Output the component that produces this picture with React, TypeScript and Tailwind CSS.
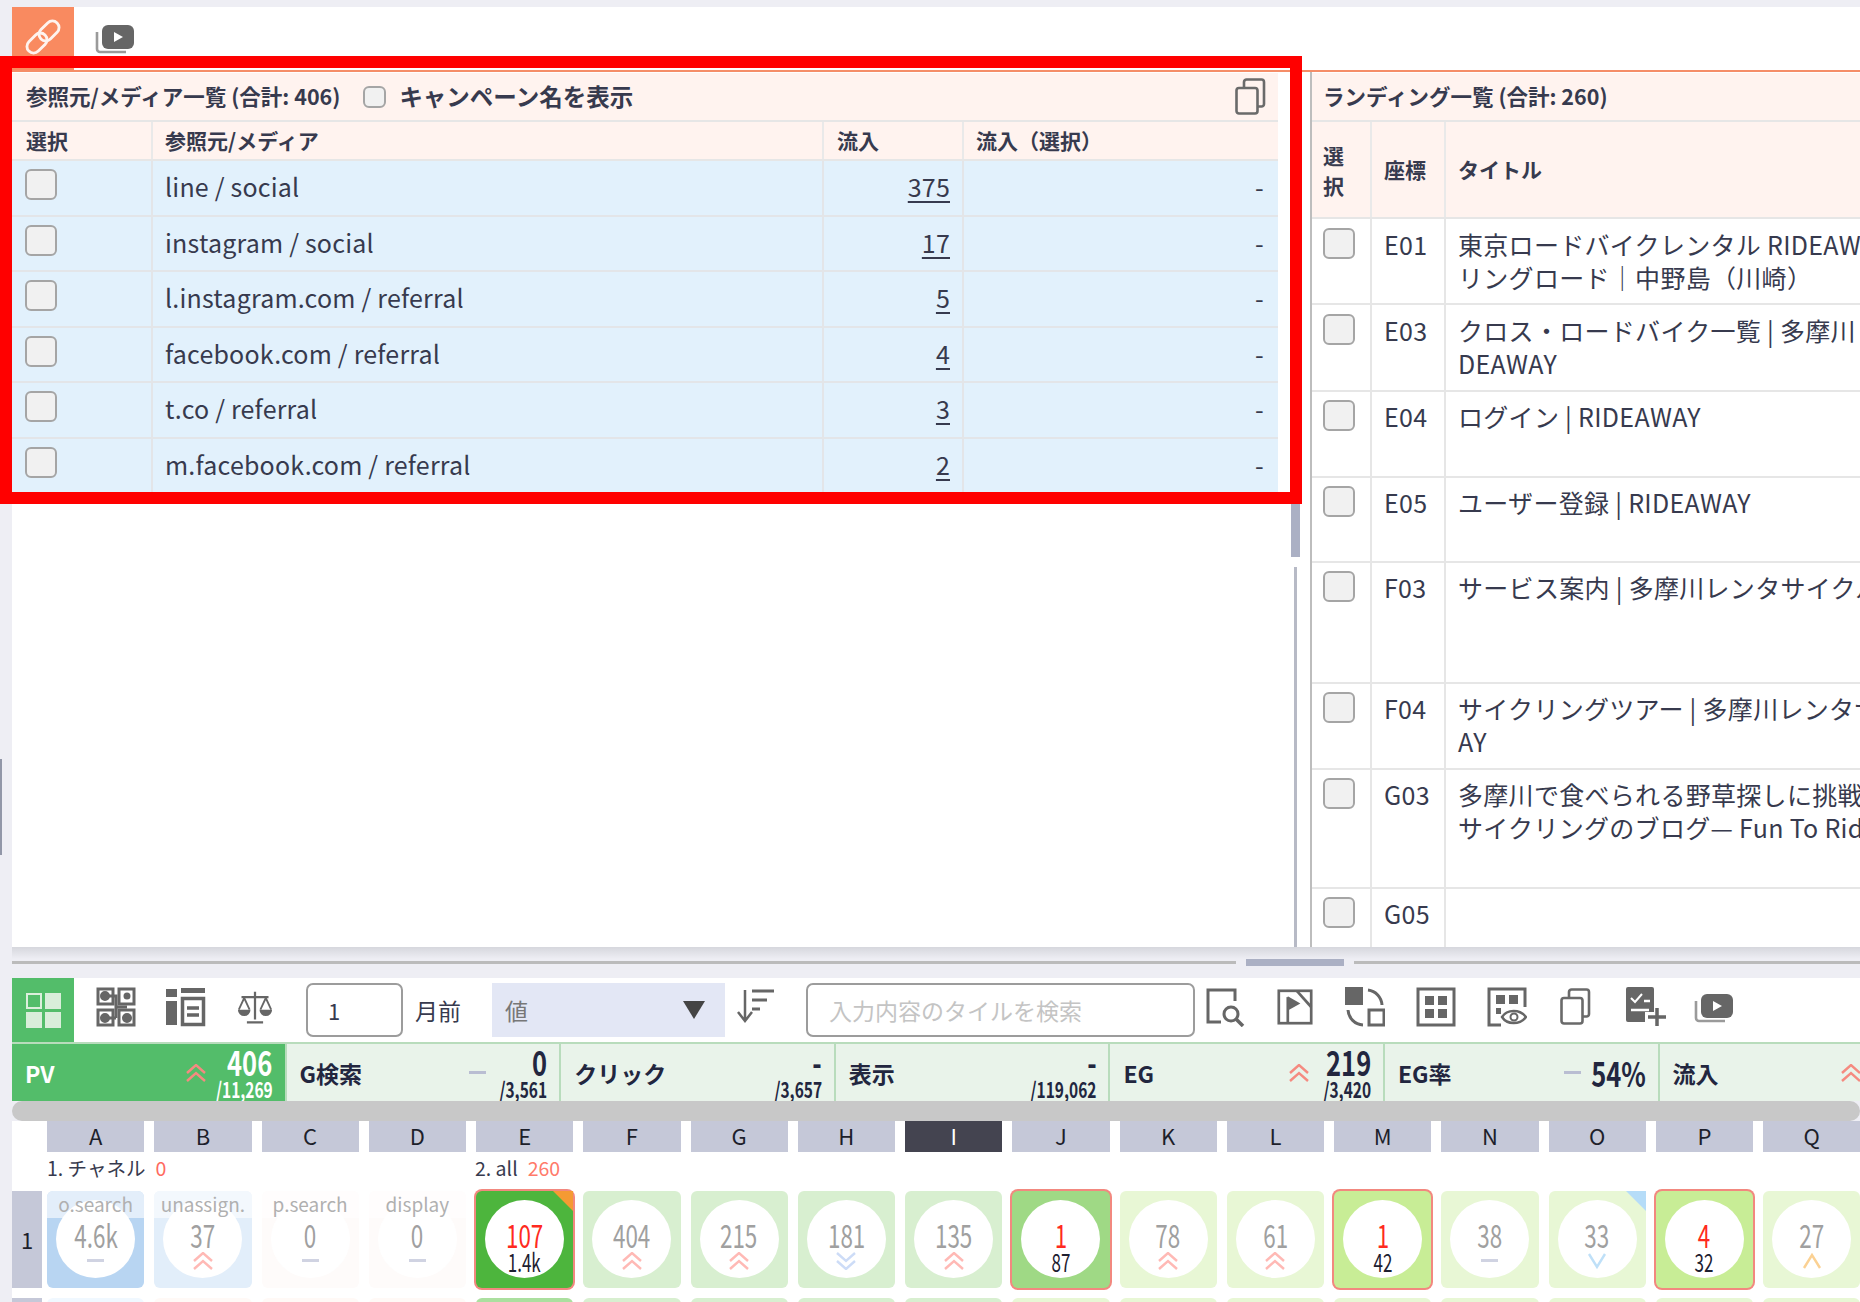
import { ReactNode } from "react";

const FONT = "font-['Noto_Sans_CJK_JP','Noto_Sans',sans-serif]";

type Trend = "up2" | "down2" | "up" | "down" | "dash";

function TrendMark({ kind, strong }: { kind: Trend; strong?: boolean }) {
  if (kind === "dash") {
    return <div className={`h-[3px] w-[17px] ${strong ? "bg-[#b9bdd2]" : "bg-[#d0d3e2]"}`} />;
  }
  const color =
    kind === "up2" ? (strong ? "#f58a80" : "#ffb9b5") : kind === "down2" ? "#cddcf7" : kind === "up" ? "#fbd193" : "#bfe0f8";
  return (
    <svg width="20" height="18" viewBox="0 0 20 18" fill="none" stroke={color} strokeWidth="2.4">
      {kind === "up2" && (
        <>
          <polyline points="1,9 10,1 19,9" />
          <polyline points="1,17 10,9 19,17" />
        </>
      )}
      {kind === "down2" && (
        <>
          <polyline points="1,1 10,9 19,1" />
          <polyline points="1,9 10,17 19,9" />
        </>
      )}
      {kind === "up" && <polyline points="2,16 10,3 18,16" />}
      {kind === "down" && <polyline points="2,2 10,15 18,2" />}
    </svg>
  );
}

function PlayStack({ className }: { className?: string }) {
  return (
    <svg className={className} viewBox="0 0 39 29" width="39" height="29">
      <path d="M2 7v17a3 3 0 0 0 3 3h26" fill="none" stroke="#9a9a9a" strokeWidth="2.6" />
      <rect x="7" y="0" width="32" height="24" rx="6" fill="#666" />
      <path d="M19 7l9 5-9 5z" fill="#fff" />
    </svg>
  );
}

function CopyIcon({ className }: { className?: string }) {
  return (
    <svg className={className} viewBox="0 0 31 37" width="31" height="37" fill="none" stroke="#6a6a6a" strokeWidth="2.6">
      <rect x="1.5" y="10" width="21" height="25.5" rx="2.5" />
      <path d="M9 10V4a2.5 2.5 0 0 1 2.500-2.500h15A2.500 2.500 0 0 1 29 4v22a2.500 2.500 0 0 1-2.500 2.500H22.500" />
    </svg>
  );
}

function ToolIcon({ children, w = 40 }: { children: ReactNode; w?: number }) {
  return (
    <svg className="mb-[7px]" viewBox="0 0 40 40" width={w} height="40" fill="none" stroke="#666" strokeWidth="3">
      {children}
    </svg>
  );
}

function Checkbox({ small }: { small?: boolean }) {
  return (
    <input
      type="checkbox"
      className={`appearance-none rounded-[6px] border-2 border-[#a5a5a5] bg-[#f1f1f1] ${small ? "h-[22px] w-[23px]" : "h-[31px] w-[32px]"}`}
    />
  );
}

const sources = [
  { name: "line / social", count: "375" },
  { name: "instagram / social", count: "17" },
  { name: "l.instagram.com / referral", count: "5" },
  { name: "facebook.com / referral", count: "4" },
  { name: "t.co / referral", count: "3" },
  { name: "m.facebook.com / referral", count: "2" },
];

const landings = [
  { code: "E01", lines: ["東京ロードバイクレンタル RIDEAWAY | 多摩川サイク", "リングロード｜中野島（川崎）"], h: "h-[86px]", top: "pt-[9px]" },
  { code: "E03", lines: ["クロス・ロードバイク一覧 | 多摩川レンタサイクル RI", "DEAWAY"], h: "h-[87px]", top: "pt-[9px]" },
  { code: "E04", lines: ["ログイン | RIDEAWAY"], h: "h-[86px]", top: "pt-[8px]" },
  { code: "E05", lines: ["ユーザー登録 | RIDEAWAY"], h: "h-[85px]", top: "pt-[8px]" },
  { code: "F03", lines: ["サービス案内 | 多摩川レンタサイクル RIDEAWAY"], h: "h-[121px]", top: "pt-[8px]" },
  { code: "F04", lines: ["サイクリングツアー | 多摩川レンタサイクル RIDEAW", "AY"], h: "h-[86px]", top: "pt-[8px]" },
  { code: "G03", lines: ["多摩川で食べられる野草探しに挑戦してみた", "サイクリングのブログ— Fun To Ride"], h: "h-[119px]", top: "pt-[8px]" },
  { code: "G05", lines: [""], h: "h-[60px]", top: "pt-[8px]" },
];

const stats: { label: string; trend?: Trend; shift?: string; value: string; total?: string; active?: boolean }[] = [
  { label: "PV", trend: "up2", value: "406", total: "/11,269", active: true },
  { label: "G検索", trend: "dash", shift: "ml-[8px]", value: "0", total: "/3,561" },
  { label: "クリック", value: "-", total: "/3,657" },
  { label: "表示", value: "-", total: "/119,062" },
  { label: "EG", trend: "up2", shift: "ml-[5px]", value: "219", total: "/3,420" },
  { label: "EG率", trend: "dash", shift: "ml-[5px]", value: "54%" },
  { label: "流入", trend: "up2", shift: "ml-[7px]", value: "", total: "" },
];

const letters = "ABCDEFGHIJKLMNOPQ".split("");

type Cell = {
  value: string;
  sub?: string;
  tag?: string;
  trend?: Trend;
  bg: string;
  corner?: "orange" | "blue";
};

const cells: Cell[] = [
  { value: "4.6k", tag: "o.search", trend: "dash", bg: "bg-[#b8d5f2]" },
  { value: "37", tag: "unassign.", trend: "up2", bg: "bg-[#e2eefa]" },
  { value: "0", tag: "p.search", trend: "dash", bg: "bg-[#fefbfa]" },
  { value: "0", tag: "display", trend: "dash", bg: "bg-[#fefbfa]" },
  { value: "107", sub: "1.4k", bg: "bg-[#4db53d]", corner: "orange" },
  { value: "404", trend: "up2", bg: "bg-[#d8efd0]" },
  { value: "215", trend: "up2", bg: "bg-[#d8efd0]" },
  { value: "181", trend: "down2", bg: "bg-[#d8efd0]" },
  { value: "135", trend: "up2", bg: "bg-[#d8efd0]" },
  { value: "1", sub: "87", bg: "bg-[#9fd985]" },
  { value: "78", trend: "up2", bg: "bg-[#e8f7d5]" },
  { value: "61", trend: "up2", bg: "bg-[#e8f7d5]" },
  { value: "1", sub: "42", bg: "bg-[#c8ed96]" },
  { value: "38", trend: "dash", bg: "bg-[#e8f7d5]" },
  { value: "33", trend: "down", bg: "bg-[#e8f7d5]", corner: "blue" },
  { value: "4", sub: "32", bg: "bg-[#c8ed96]" },
  { value: "27", trend: "up", bg: "bg-[#e8f7d5]" },
];

const nextRow = [
  "bg-[#f0f8ff]", "bg-[#fff9f6]", "bg-[#fff9f6]", "bg-[#fff9f6]", "bg-[#abdf9f]", "bg-[#d8efd0]", "bg-[#d8efd0]", "bg-[#d8efd0]", "bg-[#d8efd0]",
  "bg-[#e8f7d5]", "bg-[#e8f7d5]", "bg-[#e8f7d5]", "bg-[#e8f7d5]", "bg-[#e8f7d5]", "bg-[#e8f7d5]", "bg-[#e8f7d5]", "bg-[#e8f7d5]",
];

function HeatCell({ cell }: { cell: Cell }) {
  return (
    <div className={`relative h-[97px] w-[97.25px] shrink-0 rounded-[6px] ${cell.bg} ${cell.sub ? "ring-2 ring-[#f2887f]" : ""}`}>
      <div className="mx-auto mt-[9px] flex h-[78px] w-[79px] flex-col items-center rounded-[50%] bg-white">
        <div className={`mt-[18px] scale-x-[.7] text-[32px] leading-[33px] ${cell.sub ? "text-[#ff2a20]" : "text-[#a0a0a0]"}`}>{cell.value}</div>
        {cell.sub ? (
          <div className="-mt-[2px] scale-x-[.68] text-[25px] leading-[24px] text-[#1d2030]">{cell.sub}</div>
        ) : (
          <div className="mt-[1px] flex h-[17px] items-center justify-center">{cell.trend && <TrendMark kind={cell.trend} />}</div>
        )}
      </div>
      {cell.tag && (
        <div className="absolute inset-x-0 top-0 h-[27px] rounded-t-[6px] bg-white/60 text-center text-[19px] leading-[25px] text-[#b0b0b0]">
          {cell.tag}
        </div>
      )}
      {cell.corner === "orange" && (
        <div className="absolute right-0 top-0 h-0 w-0 border-l-[20px] border-t-[20px] border-l-transparent border-t-[#f59a33]" />
      )}
      {cell.corner === "blue" && (
        <div className="absolute right-0 top-0 h-0 w-0 border-l-[20px] border-t-[20px] border-l-transparent border-t-[#b5dcf8]" />
      )}
    </div>
  );
}

export default function App() {
  return (
    <div className={`relative h-[1302px] w-[1860px] overflow-hidden bg-[#eeeef4] pl-[12px] pt-[7px] text-[#373a4e] ${FONT}`}>
      {/* tabs */}
      <div className="flex h-[63px] items-start gap-[21px] bg-white">
        <div className="flex h-[63px] w-[62px] items-center justify-center bg-[#f98a60]">
          <svg width="38" height="38" viewBox="0 0 40 40" fill="none" stroke="#fff" strokeWidth="3" className="mb-[3px] opacity-90">
            <g transform="rotate(45 20 20)">
              <rect x="13" y="-1" width="14" height="24" rx="7" />
              <rect x="13" y="17" width="14" height="24" rx="7" />
            </g>
          </svg>
        </div>
        <PlayStack className="mt-[18px]" />
      </div>
      <div className="h-[2px] bg-[#f58d68]" />

      {/* list panels */}
      <div className="flex h-[875px] bg-white">
        <div className="w-[1266px] pt-[1px]">
          <div className="flex h-[49px] items-center border-b-2 border-[#e6e6e6] bg-[#fff3ef] pl-[14px] pr-[12px] text-[21.5px] font-bold">
            <span>参照元/メディア一覧 (合計: 406)</span>
            <span className="ml-[23px] flex items-center"><Checkbox small /></span>
            <span className="ml-[13px] text-[23.5px]">キャンペーン名を表示</span>
            <span className="ml-auto"><CopyIcon /></span>
          </div>
          <div className="flex h-[39px] items-center border-b-2 border-[#e6e6e6] bg-[#fff3ef] text-[21px] font-bold">
            <div className="flex h-full w-[141px] items-center border-r-2 border-[#e9e9e9] pl-[14px]">選択</div>
            <div className="flex h-full w-[671px] items-center border-r-2 border-[#e9e9e9] pl-[12px]">参照元/メディア</div>
            <div className="flex h-full w-[140px] items-center border-r-2 border-[#e9e9e9] pl-[13px]">流入</div>
            <div className="flex h-full flex-1 items-center pl-[12px]">流入（選択）</div>
          </div>
          {sources.map((row) => (
            <div key={row.name} className="flex h-[55.6px] border-b-2 border-[#e3e5e8] bg-[#e2f1fc] text-[25px] tracking-[.2px]">
              <div className="h-full w-[141px] border-r-2 border-[#e3e5e8] pl-[13px] pt-[8px]"><Checkbox /></div>
              <div className="flex h-full w-[671px] items-center border-r-2 border-[#e3e5e8] pb-[2px] pl-[12px]">{row.name}</div>
              <div className="flex h-full w-[140px] items-center justify-end border-r-2 border-[#e3e5e8] pb-[2px] pr-[12px]">
                <span className="underline underline-offset-4">{row.count}</span>
              </div>
              <div className="flex h-full flex-1 items-center justify-end pb-[2px] pr-[14px]">-</div>
            </div>
          ))}
        </div>

        {/* vertical splitter */}
        <div className="flex w-[32px] flex-col items-center pl-[3px]">
          <div className="h-[358px] w-[3px] bg-[#b7bac6]" />
          <div className="h-[127px] w-[9px] bg-[#abb0c4]" />
          <div className="h-[10px]" />
          <div className="w-[3px] flex-1 bg-[#b7bac6]" />
        </div>

        <div className="flex-1 overflow-hidden border-l-2 border-[#bdbdbd] pt-[1px]">
          <div className="flex h-[49px] items-center border-b-2 border-[#e6e6e6] bg-[#fff3ef] pl-[11px] text-[21.5px] font-bold">
            ランディング一覧 (合計: 260)
          </div>
          <div className="flex h-[97px] items-center border-b-2 border-[#e6e6e6] bg-[#fff3ef] text-[21px] font-bold">
            <div className="flex h-full w-[60px] items-center border-r-2 border-[#e9e9e9] pl-[11px] leading-[30px]">選<br />択</div>
            <div className="flex h-full w-[74px] items-center border-r-2 border-[#e9e9e9] pl-[12px]">座標</div>
            <div className="flex h-full flex-1 items-center pl-[12px]">タイトル</div>
          </div>
          {landings.map((row) => (
            <div key={row.code} className={`flex ${row.h} border-b-2 border-[#e6e6e6] text-[25px] leading-[33px] tracking-[.3px]`}>
              <div className={`h-full w-[60px] shrink-0 border-r-2 border-[#e6e6e6] pl-[11px] ${row.top}`}><Checkbox /></div>
              <div className={`h-full w-[74px] shrink-0 border-r-2 border-[#e6e6e6] pl-[12px] ${row.top}`}>{row.code}</div>
              <div className={`h-full flex-1 whitespace-nowrap pl-[12px] ${row.top}`}>
                {row.lines.map((line) => (
                  <div key={line}>{line}</div>
                ))}
              </div>
            </div>
          ))}
        </div>
      </div>

      {/* horizontal splitter */}
      <div className="h-[12px] bg-gradient-to-b from-[#d6d7dd] to-[#eeeef4]" />
      <div className="flex h-[19px] items-start gap-[10px]">
        <div className="mt-[2px] h-[3px] w-[1224px] bg-[#bbbbbb]" />
        <div className="h-[7px] w-[98px] bg-[#abb0c4]" />
        <div className="mt-[2px] h-[3px] flex-1 bg-[#bbbbbb]" />
      </div>

      {/* toolbar */}
      <div className="flex h-[64px] items-center bg-white">
        <div className="flex h-full w-[62px] shrink-0 items-center justify-center bg-[#53bd6a]">
          <svg width="35" height="35" viewBox="0 0 35 35">
            <rect x="1" y="1" width="14" height="14" fill="none" stroke="#dcefdc" strokeWidth="2" />
            <rect x="19" y="0" width="16" height="16" fill="#d9eeda" />
            <rect x="0" y="19" width="16" height="16" fill="#d9eeda" />
            <rect x="19" y="19" width="16" height="16" fill="#d9eeda" />
          </svg>
        </div>
        <div className="ml-[22px]">
          <ToolIcon>
            <rect x="2" y="2" width="15" height="15" />
            <rect x="23" y="2" width="15" height="15" />
            <rect x="2" y="23" width="15" height="15" />
            <rect x="23" y="23" width="15" height="15" />
            <path d="M9 9h11v22M20 20h11M9 31h11" />
            <circle cx="9" cy="9" r="3.500" fill="#666" />
            <circle cx="31" cy="9" r="2" fill="#666" />
            <circle cx="9" cy="31" r="3.500" fill="#666" />
            <circle cx="31" cy="31" r="3.500" fill="#666" />
          </ToolIcon>
        </div>
        <div className="ml-[30px]">
          <ToolIcon>
            <path d="M0 2h11v8H0zM0 14h11v24H0z" fill="#666" stroke="none" />
            <path d="M15 1h24v5H15z" fill="#666" stroke="none" />
            <rect x="16.500" y="11.500" width="21" height="26" strokeWidth="3.500" />
            <path d="M21 21h12M21 28h12" strokeWidth="3.500" />
          </ToolIcon>
        </div>
        <div className="ml-[31px]">
          <ToolIcon w={36}>
            <path d="M20 3v31M11 37h18M5 9h30" strokeWidth="2.500" />
            <path d="M8 10L2 23M8 10l6 13M32 10l-6 13M32 10l6 13" strokeWidth="2" />
            <path d="M1 23h14a7 7 0 0 1-14 0zM25 23h14a7 7 0 0 1-14 0z" fill="#666" stroke="none" />
          </ToolIcon>
        </div>
        <div className="ml-[33px] flex h-[54px] w-[97px] items-center rounded-[7px] border-2 border-[#9c9c9c] pl-[20px] text-[22px]">1</div>
        <div className="ml-[12px] w-[77px] text-[23px]">月前</div>
        <div className="flex h-[54px] w-[233px] items-center justify-between bg-[#e3e7f5] pl-[13px] pr-[20px] text-[23px] text-[#777]">
          <span>値</span>
          <svg width="22" height="18" viewBox="0 0 22 18"><path d="M0 0h22L11 18z" fill="#444" /></svg>
        </div>
        <div className="ml-[11px]">
          <ToolIcon>
            <path d="M9 3v30M2 25l7 9 7-9" strokeWidth="2.500" />
            <path d="M16 4h22M16 13h15M16 22h8" strokeWidth="3" />
          </ToolIcon>
        </div>
        <input
          placeholder="入力内容のタイルを検索"
          className="ml-[30px] h-[54px] w-[389px] rounded-[7px] border-2 border-[#9c9c9c] pl-[21px] text-[23px] outline-none placeholder:text-[#c4c4c4]"
        />
        <div className="ml-[10px]">
          <ToolIcon>
            <path d="M30 14V3H3v32h13" />
            <circle cx="26" cy="27" r="7" />
            <path d="M31 32l7 7" strokeWidth="3.500" />
          </ToolIcon>
        </div>
        <div className="ml-[32px]">
          <ToolIcon w={36}>
            <rect x="2" y="2" width="36" height="36" />
            <path d="M22 2l16 18" />
            <path d="M12 37V9" />
            <path d="M12 8l14 8-14 8z" fill="#666" stroke="none" />
          </ToolIcon>
        </div>
        <div className="ml-[32px]">
          <ToolIcon>
            <rect x="0" y="0" width="18" height="18" fill="#666" stroke="none" />
            <rect x="24" y="23" width="15" height="15" />
            <path d="M23 3a16 16 0 0 1 14 15M3 23a16 16 0 0 0 15 15" />
          </ToolIcon>
        </div>
        <div className="ml-[31px]">
          <ToolIcon>
            <rect x="2" y="2" width="36" height="36" />
            <path d="M9 9h9v9H9zM22 9h9v9h-9zM9 22h9v9H9zM22 22h9v9h-9z" fill="#666" stroke="none" />
          </ToolIcon>
        </div>
        <div className="ml-[31px]">
          <ToolIcon>
            <path d="M14 38H2V2h36v18" />
            <path d="M9 8h9v9H9zM22 8h9v9h-9zM9 21h5v6H9z" fill="#666" stroke="none" />
            <path d="M15 30c5-8 18-8 24 0-6 8-19 8-24 0z" strokeWidth="2.400" />
            <circle cx="27" cy="30" r="3.500" strokeWidth="2" />
          </ToolIcon>
        </div>
        <div className="ml-[33px]"><CopyIcon className="mb-[8px]" /></div>
        <div className="ml-[35px]">
          <ToolIcon>
            <path d="M0 2a2 2 0 0 1 2-2h24a2 2 0 0 1 2 2v23h-9v10H2a2 2 0 0 1-2-2z" fill="#666" stroke="none" />
            <path d="M5 11l4 4 7-8" stroke="#fff" strokeWidth="2" />
            <path d="M5 23h18M18 14h6" stroke="#fff" strokeWidth="2.500" />
            <path d="M31 21v18M22 30h18" strokeWidth="3.500" />
          </ToolIcon>
        </div>
        <PlayStack className="mb-[4px] ml-[28px]" />
      </div>

      {/* stat bar */}
      <div className="flex h-[59px] overflow-hidden border-t-2 border-[#b8dcbc]">
        {stats.map((s) => (
          <div
            key={s.label}
            className={`grid h-[57px] w-[274.6px] shrink-0 grid-cols-[161px_20px_minmax(0,1fr)] items-center border-r-2 border-[#b8dcbc] pl-[13px] pr-[12px] font-bold ${
              s.active ? "bg-[#53bd6a] text-white" : "bg-[#e9f3ea] text-[#22263f]"
            }`}
          >
            <div className="whitespace-nowrap pt-[2px] text-[23px]">{s.label}</div>
            <div className={s.shift}>{s.trend && <TrendMark kind={s.trend} strong />}</div>
            <div className="flex min-w-0 flex-col items-end whitespace-nowrap">
              <div className="origin-right scale-x-[.75] text-[34px] leading-[33px]">{s.value}</div>
              {s.total && <div className="origin-right scale-x-[.72] text-[21.5px] leading-[22px]">{s.total}</div>}
            </div>
          </div>
        ))}
      </div>
      <div className="h-[20px] rounded-[10px] bg-[#c8c8c8]" />

      {/* heat grid */}
      <div className="h-[200px] bg-white">
        <div className="flex gap-[10px] pl-[35px]">
          {letters.map((l) => (
            <div
              key={l}
              className={`h-[31px] w-[97.25px] shrink-0 text-center text-[22px] leading-[29px] ${l === "I" ? "bg-[#444450] text-white" : "bg-[#c5c8d8] text-[#1d1f2b]"}`}
            >
              {l}
            </div>
          ))}
        </div>
        <div className="flex h-[39px] items-center gap-[10px] pb-[8px] pl-[35px] text-[19.5px] leading-none">
          <div className="flex w-[418px] items-center gap-[10px]">
            <span>1. チャネル</span>
            <span className="text-[#ff6a60]">0</span>
          </div>
          <div className="flex items-center gap-[10px]">
            <span>2. all</span>
            <span className="text-[#ff7a6a]">260</span>
          </div>
        </div>
        <div className="flex gap-[5px]">
          <div className="flex h-[97px] w-[30px] shrink-0 items-center justify-center bg-[#c5c8d8] text-[22px] text-[#1d1f2b]">1</div>
          <div className="flex gap-[10px]">
            {cells.map((c, i) => (
              <HeatCell key={i} cell={c} />
            ))}
          </div>
        </div>
        <div className="mt-[10px] flex gap-[5px]">
          <div className="h-[20px] w-[30px] shrink-0 bg-[#c5c8d8]" />
          <div className="flex gap-[10px]">
            {nextRow.map((bg, i) => (
              <div key={i} className={`h-[20px] w-[97.25px] shrink-0 rounded-t-[6px] ${bg}`} />
            ))}
          </div>
        </div>
      </div>

      {/* edge handle */}
      <div className="absolute left-0 top-[759px] h-[96px] w-[2px] bg-[#9297a8]" />
      {/* red selection frame */}
      <div className="pointer-events-none absolute left-0 top-[56px] h-[448px] w-[1302px] border-[12px] border-[#ff0000]" />
    </div>
  );
}
